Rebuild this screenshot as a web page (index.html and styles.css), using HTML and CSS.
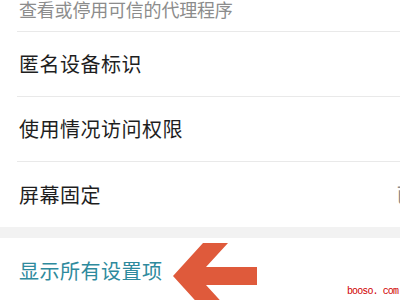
FILE: index.html
```html
<!DOCTYPE html>
<html lang="zh-CN">
<head>
<meta charset="utf-8">
<link rel="stylesheet" href="styles.css">
</head>
<body>
<div class="page">
  <div class="list">
    <div class="item item-sub">
      <span class="subtitle">查看或停用可信的代理程序</span>
    </div>
    <div class="item"><span class="title">匿名设备标识</span></div>
    <div class="item"><span class="title">使用情况访问权限</span></div>
    <div class="item item-last">
      <span class="title">屏幕固定</span>
      <span class="status">已关闭</span>
    </div>
  </div>
  <div class="band"></div>
  <div class="list">
    <div class="item item-last item-link"><span class="link">显示所有设置项</span></div>
  </div>
  <svg class="arrow" width="90" height="60" viewBox="0 0 90 60">
    <polygon points="3,36 33,3 58,3 36,27 87,27 87,45 36,45 58,69 33,69" fill="#df5a3b"/>
  </svg>
  <span class="watermark">booso. com</span>
</div>
</body>
</html>
```
FILE: styles.css
```css
html, body {
  margin: 0;
  padding: 0;
  width: 400px;
  height: 300px;
  overflow: hidden;
  background: #ffffff;
}
.page {
  position: relative;
  width: 400px;
  height: 300px;
  overflow: hidden;
  font-family: "Noto Sans CJK SC", "Noto Sans", sans-serif;
}
.list {
  display: flex;
  flex-direction: column;
}
.item {
  margin-left: 17px;
  padding-left: 2px;
  height: 64px;
  display: flex;
  align-items: center;
  border-bottom: 1px solid #e9e9e9;
}
.item-sub {
  height: 24px;
  margin-top: -3px;
  padding-bottom: 10px;
  align-items: center;
}
.item-last {
  border-bottom: none;
  height: 65px;
}
.item-link {
  height: 66px;
}
.subtitle {
  font-size: 18px;
  line-height: 24px;
  color: #8c8c8c;
  letter-spacing: -0.2px;
}
.title {
  font-size: 20px;
  line-height: 26px;
  color: #1e1e1e;
  letter-spacing: 0.5px;
}
.status {
  margin-left: auto;
  margin-right: -56px;
  font-size: 20px;
  color: #8a8a8a;
  white-space: nowrap;
}
.band {
  height: 11px;
  background: #f2f2f2;
}
.link {
  font-size: 20px;
  line-height: 26px;
  color: #2e8a9d;
  letter-spacing: 0.5px;
}
.arrow {
  position: absolute;
  left: 170px;
  top: 240px;
}
.watermark {
  position: absolute;
  left: 347px;
  top: 286px;
  font-family: "Liberation Mono", monospace;
  font-size: 10px;
  line-height: 12px;
  letter-spacing: -0.9px;
  color: #d00000;
  white-space: nowrap;
}
```
